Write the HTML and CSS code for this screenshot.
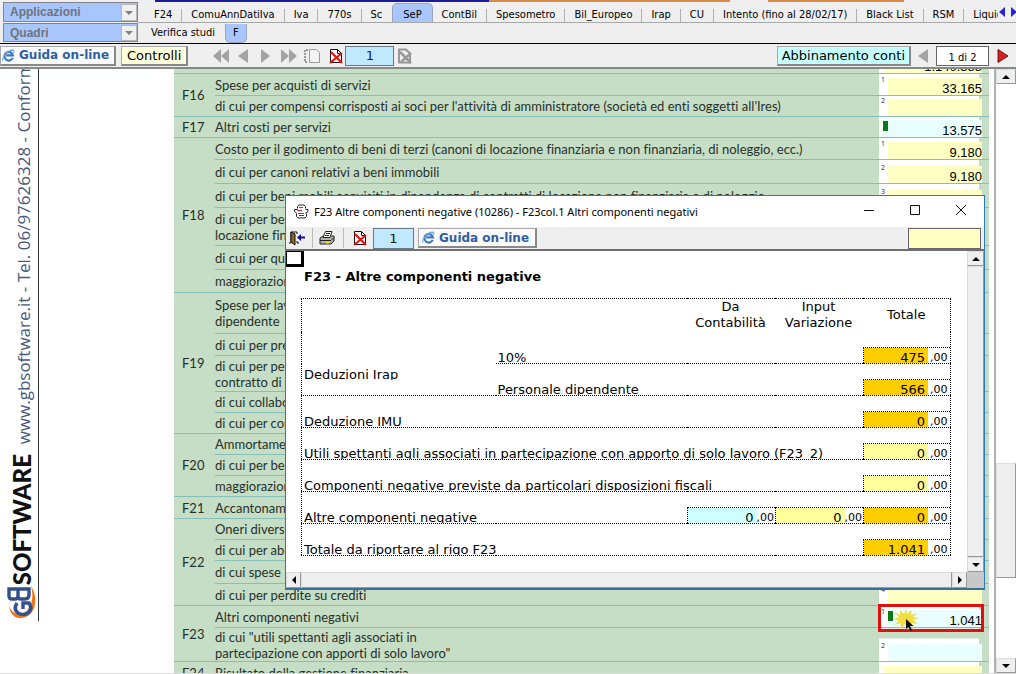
FILE: index.html
```html
<!DOCTYPE html>
<html lang="it">
<head>
    <meta charset="UTF-8">
    <meta name="viewport" content="width=device-width, initial-scale=1.0">
    <title>Quadro F</title>
    <link rel="stylesheet" href="styles.css">
</head>
<body>
    <svg class="defs">
        <symbol id="ie" viewBox="0 0 14 14">
            <path d="M11.5 9.5A4.6 4.6 0 1 1 11.7 6.8H4.5" fill="none" stroke="#3a78c0" stroke-width="2.3"/>
            <path d="M1 12.5C-.5 9 6 1.500 11 1.200c2 0 2 1.300 1.500 2.800" fill="none" stroke="#6da0dc" stroke-width="1.2"/>
        </symbol>
        <symbol id="docx" viewBox="0 0 16 16">
            <path d="M2.500 1.500h7l4 4v9h-11z" fill="#fff" stroke="#111"/>
            <path d="M9.500 1.500v4h4" fill="none" stroke="#111"/>
            <path d="M3 4l11 11M14 5L2 15" stroke="#e01515" stroke-width="2.2"/>
        </symbol>
        <symbol id="up" viewBox="0 0 8 8"><path d="M0 6h8L4 2z"/></symbol>
        <symbol id="down" viewBox="0 0 8 8"><path d="M0 2h8L4 6z"/></symbol>
        <symbol id="left" viewBox="0 0 8 8"><path d="M6 0v8L2 4z"/></symbol>
        <symbol id="right" viewBox="0 0 8 8"><path d="M2 0v8l4-4z"/></symbol>
    </svg>

    <header class="top">
        <div class="strip"></div>
        <div class="menu">
            <div class="combo">
                <select aria-label="Applicazioni"><option>Applicazioni</option></select>
                <span class="combo-arrow"><svg><use href="#down"/></svg></span>
            </div>
            <nav class="tabs">
                <a href="#">F24</a>
                <a href="#">ComuAnnDatiIva</a>
                <a href="#">Iva</a>
                <a href="#">770s</a>
                <a href="#" class="before">Sc</a>
                <a href="#" class="active">SeP</a>
                <a href="#">ContBil</a>
                <a href="#">Spesometro</a>
                <a href="#">Bil_Europeo</a>
                <a href="#">Irap</a>
                <a href="#">CU</a>
                <a href="#">Intento (fino al 28/02/17)</a>
                <a href="#">Black List</a>
                <a href="#">RSM</a>
                <a href="#" class="last">Liquidazioni</a>
            </nav>
            <div class="tab-scroll">
                <svg viewBox="0 0 18 10"><path d="M7 0v10L1 5zM13 0v10l6-5z" fill="#2a22d8"/></svg>
            </div>
        </div>
        <div class="menu second">
            <div class="combo">
                <select aria-label="Quadri"><option>Quadri</option></select>
                <span class="combo-arrow"><svg><use href="#down"/></svg></span>
            </div>
            <nav class="tabs">
                <a href="#" class="before">Verifica studi</a>
                <a href="#" class="active">F</a>
            </nav>
        </div>
        <div class="toolbar">
            <button class="guide"><svg><use href="#ie"/></svg>Guida on-line</button>
            <button class="check">Controlli</button>
            <div class="nav-icons">
                <svg class="nav" viewBox="0 0 132 16">
                    <g fill="#a3a3a3">
                        <path d="M8 1v14L0 8zM16 1v14L8 8z"/>
                        <path d="M35 1v14l-10-7zM48 1l9 7-9 7zM68 1l8 7-8 7zM76 1l8 7-8 7z"/>
                    </g>
                    <g fill="none" stroke="#999">
                        <path d="M96.500 1.500h7l3 3v10h-10z" fill="#f4f4f4"/>
                        <path d="M95 2h-3v12h3" stroke-dasharray="2 1" stroke-width="2"/>
                    </g>
                    <use href="#docx" x="115" y="0" width="16" height="16"/>
                </svg>
                <input class="page" value="1" aria-label="Copia" readonly>
                <svg class="gray-doc" viewBox="0 0 16 16">
                    <path d="M2 1.500h7l4 4v9H2z" fill="#eee" stroke="#999" stroke-width="2"/>
                    <path d="M3 4l11 11M14 5L4 14" stroke="#999" stroke-width="2.500"/>
                </svg>
            </div>
            <button class="match">Abbinamento conti</button>
            <svg class="step" viewBox="0 0 12 14"><path d="M11 0v14L1 7z" fill="#a3a3a3"/></svg>
            <input class="pager" value="1 di 2" aria-label="Pagina" readonly>
            <svg class="step end" viewBox="0 0 12 14"><path d="M1 .5l10 6.500-10 6.500z" fill="#d3211f" stroke="#7b1010"/></svg>
        </div>
    </header>

    <main class="content">
        <aside class="brand">
            <svg class="logo" viewBox="0 0 30 36">
                <path d="M24 1c8 12 5 30-9 32C8 34 3 29 2 21c3 7 8 9 14 7 9-3 11-17 8-27z" fill="#f07818"/>
                <g fill="none" stroke="#34508c" stroke-width="3.400">
                    <path d="M2 4v7q0 3 3 3h3q3 0 3-3V4v7q0 3 3 3h4q4 0 4-4V4z"/>
                    <path d="M10 18q-4 6 1 10 5 3 10 0 5-4 1-10h-6v6"/>
                </g>
            </svg>
            <span class="name">SOFTWARE</span>
            <span class="site">www.gbsoftware.it - Tel. 06/97626328 - Conforme</span>
        </aside>

        <section class="sheet">
            <table>
                <colgroup><col class="c-code"><col><col class="c-value"></colgroup>
                <tbody>
                    <tr><th></th><td></td><td class="value"><div class="cut"><input value="1.140.388" aria-label="F15" readonly></div></td></tr>
                </tbody>
                <tbody>
                    <tr class="h22"><th rowspan="2">F16</th><td>Spese per acquisti di servizi</td><td class="value"><div class="box"><sup>1</sup><input value="33.165" aria-label="F16 col. 1" readonly></div></td></tr>
                    <tr class="h21"><td>di cui per compensi corrisposti ai soci per l'attività di amministratore (società ed enti soggetti all'Ires)</td><td class="value"><div class="box"><sup>2</sup><input aria-label="F16 col. 2" readonly></div></td></tr>
                </tbody>
                <tbody>
                    <tr class="h21"><th>F17</th><td>Altri costi per servizi</td><td class="value"><div class="box wide"><i class="mark"></i><input class="cyan" value="13.575" aria-label="F17" readonly></div></td></tr>
                </tbody>
                <tbody>
                    <tr class="h22"><th rowspan="6">F18</th><td>Costo per il godimento di beni di terzi (canoni di locazione finanziaria e non finanziaria, di noleggio, ecc.)</td><td class="value"><div class="box"><sup>1</sup><input value="9.180" aria-label="F18 col. 1" readonly></div></td></tr>
                    <tr class="h24"><td>di cui per canoni relativi a beni immobili</td><td class="value"><div class="box"><sup>2</sup><input value="9.180" aria-label="F18 col. 2" readonly></div></td></tr>
                    <tr class="h24"><td>di cui per beni mobili acquisiti in dipendenza di contratti di locazione non finanziaria e di noleggio</td><td class="value"><div class="box"><sup>3</sup><input aria-label="F18 col. 3" readonly></div></td></tr>
                    <tr class="h38"><td>di cui per beni mobili<br>locazione finanziaria</td><td class="value"></td></tr>
                    <tr class="h24"><td>di cui per quote</td><td class="value"></td></tr>
                    <tr class="h23"><td>maggiorazioni</td><td class="value"></td></tr>
                </tbody>
                <tbody>
                    <tr class="h41"><th rowspan="5">F19</th><td>Spese per lavoro<br>dipendente</td><td class="value"></td></tr>
                    <tr class="h22"><td>di cui per prestazioni</td><td class="value"></td></tr>
                    <tr class="h36"><td>di cui per personale<br>contratto di</td><td class="value"></td></tr>
                    <tr class="h21"><td>di cui collaboratori</td><td class="value"></td></tr>
                    <tr class="h21"><td>di cui per compensi</td><td class="value"></td></tr>
                </tbody>
                <tbody>
                    <tr class="h21"><th rowspan="3">F20</th><td>Ammortamenti</td><td class="value"></td></tr>
                    <tr class="h21"><td>di cui per beni</td><td class="value"></td></tr>
                    <tr class="h21"><td>maggiorazioni</td><td class="value"></td></tr>
                </tbody>
                <tbody>
                    <tr class="h22"><th>F21</th><td>Accantonamenti</td><td class="value"></td></tr>
                </tbody>
                <tbody>
                    <tr class="h21"><th rowspan="4">F22</th><td>Oneri diversi</td><td class="value"></td></tr>
                    <tr class="h21"><td>di cui per abbonamenti</td><td class="value"></td></tr>
                    <tr class="h23"><td>di cui spese</td><td class="value"></td></tr>
                    <tr class="h22"><td>di cui per perdite su crediti</td><td class="value"><div class="box"><sup>4</sup><input aria-label="F22 col. 4" readonly></div></td></tr>
                </tbody>
                <tbody>
                    <tr class="h22">
                        <th rowspan="2">F23</th>
                        <td>Altri componenti negativi</td>
                        <td class="value">
                            <div class="box selected">
                                <sup>1</sup><i class="mark"></i><input class="cyan" value="1.041" aria-label="F23 col. 1" readonly>
                                <svg class="burst" viewBox="0 0 26 22">
                                    <path d="M13 0l1 5 5-4-1 5 6-2-4 4 6 1-6 2 5 4-6-1 1 5-4-4-2 6-2-6-5 5 1-6-7 2 5-4-6-2 6-2-5-5 6 3 0-5 4 4z" fill="#f3dc3f"/>
                                    <path d="M13 10v10l2.500-2 2 4 1.500-1-2-4h3.500z" fill="#111"/>
                                </svg>
                            </div>
                        </td>
                    </tr>
                    <tr class="h34"><td>di cui "utili spettanti agli associati in<br>partecipazione con apporti di solo lavoro"</td><td class="value half"><div class="box"><sup>2</sup><input class="cyan" aria-label="F23 col. 2" readonly></div></td></tr>
                </tbody>
                <tbody>
                    <tr class="h22"><th>F24</th><td>Risultato della gestione finanziaria</td><td class="value"><div class="box wide"><input aria-label="F24" readonly></div></td></tr>
                </tbody>
            </table>
        </section>

        <div class="vscroll main-scroll">
            <button aria-label="Su"><svg><use href="#up"/></svg></button>
            <div class="track"><div class="thumb"></div></div>
            <button aria-label="Giù"><svg><use href="#down"/></svg></button>
        </div>
    </main>

    <div class="window" role="dialog" aria-labelledby="window-title">
        <div class="titlebar">
            <svg class="app" viewBox="0 0 16 15">
                <path d="M4.500 4.500V2.500L6 1h5l1.500 1.500v2M1.500 5.500h3M12.500 5.500H15M1.500 5.500v2l2 1.500M15 5.500v2l-2.500 1.500M3.500 9.500v3L5 14h7l1.500-1.500v-3" fill="none" stroke="#222"/>
                <path d="M6 3.500h4M4 6.500h5M5 9.500h6" stroke="#e0203a"/><path d="M6 11.500h5" stroke="#3030c8"/>
            </svg>
            <span id="window-title">F23 Altre componenti negative (10286) - F23col.1 Altri componenti negativi</span>
            <div class="controls">
                <button aria-label="Riduci"><svg viewBox="0 0 12 12"><path d="M1 6.500h10"/></svg></button>
                <button aria-label="Ingrandisci"><svg viewBox="0 0 12 12"><path d="M1.500 1.500h9v9h-9z"/></svg></button>
                <button aria-label="Chiudi"><svg viewBox="0 0 12 12"><path d="M1 1l10 10M11 1L1 11"/></svg></button>
            </div>
        </div>
        <div class="wtools">
            <button class="icon" aria-label="Esci">
                <svg viewBox="0 0 16 14"><path d="M0 12h2V1h6v2M8 10v2h2" fill="none" stroke="#111"/><path d="M2 1l4 2v11l-4-3z" fill="#8c6a25" stroke="#111"/><path d="M8 6.500l4-3.500v2.500h4v2h-4V10z" fill="#10109c"/></svg>
            </button>
            <button class="icon" aria-label="Stampa">
                <svg viewBox="0 0 16 14"><path d="M1 7l3-2h11v5l-3 3H1z" fill="#b4b4aa" stroke="#222"/><path d="M4 6.500l2.500-6H13l-2 6z" fill="#fff" stroke="#222"/><path d="M1 9.500h11l3-3M7 2.500h4M6 4.500h4" fill="none" stroke="#222"/><path d="M7 11.500h3" stroke="#e8dc30" stroke-width="2"/></svg>
            </button>
            <button class="icon" aria-label="Elimina"><svg><use href="#docx"/></svg></button>
            <input class="page" value="1" aria-label="Numero" readonly>
            <button class="guide"><svg><use href="#ie"/></svg>Guida on-line</button>
            <input class="note" aria-label="Nota" readonly>
        </div>
        <div class="wbody">
            <div class="pane">
                <div class="corner"></div>
                <h1>F23 - Altre componenti negative</h1>
                <table class="detail">
                    <colgroup><col class="d-label"><col><col class="d-num"><col class="d-num"><col class="d-num"></colgroup>
                    <thead>
                        <tr><th></th><th></th><th>Da<br>Contabilità</th><th>Input<br>Variazione</th><th>Totale</th></tr>
                    </thead>
                    <tbody>
                        <tr><td rowspan="2" class="open"><p>Deduzioni Irap</p></td><td colspan="3"><p>10%</p></td><td><div class="amount gold"><output>475</output><span>,00</span></div></td></tr>
                        <tr><td colspan="3"><p>Personale dipendente</p></td><td><div class="amount gold"><output>566</output><span>,00</span></div></td></tr>
                        <tr><td colspan="4"><p>Deduzione IMU</p></td><td><div class="amount gold"><output>0</output><span>,00</span></div></td></tr>
                        <tr><td colspan="4"><p>Utili spettanti agli associati in partecipazione con apporto di solo lavoro (F23_2)</p></td><td><div class="amount"><output>0</output><span>,00</span></div></td></tr>
                        <tr><td colspan="4"><p>Componenti negative previste da particolari disposizioni fiscali</p></td><td><div class="amount"><output>0</output><span>,00</span></div></td></tr>
                        <tr><td colspan="2"><p>Altre componenti negative</p></td><td><div class="amount aqua part"><output>0</output><span>,00</span></div></td><td><div class="amount part"><output>0</output><span>,00</span></div></td><td><div class="amount gold"><output>0</output><span>,00</span></div></td></tr>
                        <tr><td colspan="4"><p>Totale da riportare al rigo F23</p></td><td><div class="amount gold"><output>1.041</output><span>,00</span></div></td></tr>
                    </tbody>
                </table>
            </div>
            <div class="vscroll">
                <button aria-label="Su"><svg><use href="#up"/></svg></button>
                <div class="track"><div class="thumb"></div></div>
                <button aria-label="Giù"><svg><use href="#down"/></svg></button>
            </div>
            <div class="hscroll">
                <button aria-label="Sinistra"><svg><use href="#left"/></svg></button>
                <div class="track"><div class="thumb"></div></div>
                <button aria-label="Destra"><svg><use href="#right"/></svg></button>
            </div>
            <div class="grip"></div>
        </div>
    </div>
</body>
</html>
```

FILE: styles.css
```css
:root {
    --face: #efefef;
    --blue: #a8c6fb;
    --green: #c6dec6;
    --line: #86bfb5;
    --yellow: #ffffc4;
    --cyan: #e9ffff;
    --verdana: "DejaVu Sans", sans-serif;
    --tahoma: "DejaVu Sans Condensed", "DejaVu Sans", sans-serif;
}

* {
    box-sizing: border-box;
    margin: 0;
    padding: 0;
}

body {
    height: 100vh;
    display: flex;
    flex-direction: column;
    overflow: hidden;
    background: #fff;
    font-family: var(--tahoma);
    font-size: 11px;
    color: #000;
}

a {
    color: inherit;
    text-decoration: none;
}

button, input, select {
    font: inherit;
    color: inherit;
    border-radius: 0;
}

input {
    min-width: 0;
    outline: none;
}

.defs {
    position: absolute;
    width: 0;
    height: 0;
}

/* Header */
.top {
    flex: none;
    background: var(--face);
    border-bottom: 2px solid #848a84;
}

.strip {
    height: 2px;
    background: linear-gradient(to right, #efefef 155px, #1a1a9c 155px, #1a1a9c 489px, #d98c4a 489px, #d98c4a 730px, #efefef 730px, #efefef 768px, #d98c4a 768px, #d98c4a 904px, #efefef 904px);
}

.menu {
    display: flex;
    height: 21px;
    padding-left: 3px;
}

.menu.second {
    height: 20px;
}

.combo {
    position: relative;
    flex: none;
    width: 135px;
    margin-bottom: 1px;
}

.combo select {
    appearance: none;
    display: block;
    width: 100%;
    height: 100%;
    padding-left: 6px;
    border: 1px solid #84848c;
    background: var(--blue);
    color: #6c737d;
    font: bold 12px "Liberation Sans", sans-serif;
    opacity: 1;
}

.combo-arrow {
    position: absolute;
    top: 2px;
    right: 1px;
    bottom: 1px;
    width: 16px;
    display: flex;
    align-items: center;
    justify-content: center;
    background: #f0f0f0;
    border: 1px solid #b8b8b8;
    pointer-events: none;
}

.combo-arrow svg {
    width: 8px;
    height: 8px;
    fill: #808080;
}

.tabs {
    flex: 1;
    display: flex;
    align-items: flex-end;
    min-width: 0;
    overflow: hidden;
    padding-left: 7px;
    border-bottom: 1px solid #a8a8a8;
}

.tabs a {
    position: relative;
    flex: none;
    height: 19px;
    padding: 0 10px 0 9px;
    line-height: 23px;
    white-space: nowrap;
}

.tabs a::after {
    content: "";
    position: absolute;
    right: 0;
    bottom: 0;
    width: 1px;
    height: 13px;
    background: #b0b0b0;
}

.tabs .active {
    padding: 0 10px;
    line-height: 21px;
    background: var(--blue);
    border: 1px solid #9aa4b8;
    border-width: 1px 1px 0;
    border-radius: 5px 5px 0 0;
}

.tabs .active::after, .tabs .before::after, .tabs .last::after {
    display: none;
}

.second .tabs {
    padding-left: 4px;
    border-bottom: 0;
}

.second .tabs a {
    line-height: 17px;
}

.second .tabs .active {
    padding: 0 7px;
    border-width: 0 1px 1px;
    border-radius: 0 0 5px 5px;
}

.tab-scroll {
    flex: none;
    width: 18px;
    padding-top: 5px;
    border-bottom: 1px solid #a8a8a8;
}

.tab-scroll svg {
    display: block;
    height: 10px;
    width: 18px;
}

.toolbar {
    display: flex;
    align-items: center;
    height: 24px;
    border-top: 1px solid #000;
}

.toolbar button, .guide {
    flex: none;
    height: 20px;
    border: 1px solid #aaa;
    border-right: 2px solid #888;
    border-bottom: 2px solid #888;
    white-space: nowrap;
}

.guide {
    display: flex;
    align-items: center;
    gap: 4px;
    padding: 0 6px 0 3px;
    background: #fafafa;
    color: #2f5fa3;
    font: bold 12px var(--verdana);
}

.guide svg {
    width: 13px;
    height: 13px;
}

.toolbar .guide {
    padding: 0 5px 0 1px;
}

.check, .match {
    padding: 0 5px;
    font: 13px var(--verdana);
}

.toolbar .check {
    margin-left: 5px;
    background: #ffffdc;
}

.toolbar .match {
    margin-left: auto;
    padding: 0 4px;
    background: #c6ffff;
}

.nav-icons {
    display: flex;
    align-items: center;
    margin-left: 25px;
}

.nav {
    width: 132px;
    height: 16px;
}

.page {
    width: 49px;
    height: 20px;
    border: 1px solid #6a7a84;
    background: #c0e8ff;
    color: #1414a0;
    font: 13px var(--verdana);
    text-align: center;
}

.gray-doc {
    width: 16px;
    height: 16px;
    margin-left: 3px;
}

.step {
    flex: none;
    width: 12px;
    height: 14px;
    margin: 0 7px 0 6px;
}

.step.end {
    margin: 0 7px 0 8px;
}

.pager {
    flex: none;
    width: 53px;
    height: 20px;
    padding-top: 3px;
    border: 1px solid #666;
    text-align: center;
}

/* Page area */
.content {
    flex: 1;
    min-height: 0;
    display: flex;
    overflow: hidden;
    border-bottom: 1px solid #ddd;
}

.brand {
    flex: none;
    width: 39px;
    height: 552px;
    margin-right: 135px;
    display: flex;
    flex-direction: column-reverse;
    align-items: center;
    overflow: hidden;
    border-right: 1px solid #333;
}

.brand span {
    flex: none;
    writing-mode: vertical-rl;
    transform: rotate(180deg);
    white-space: nowrap;
}

.logo {
    flex: none;
    width: 30px;
    height: 36px;
    margin-left: 6px;
}

.name {
    margin-left: 6px;
    font: 900 24px/24px Lato, sans-serif;
    color: #111;
}

.site {
    margin: 0 0 9px 10px;
    font: 17px/20px "Open Sans", sans-serif;
    color: #47587c;
}

.sheet {
    flex: 1;
    min-width: 0;
    height: 604px;
    overflow: hidden;
}

.sheet table {
    width: 100%;
    table-layout: fixed;
    border-collapse: collapse;
    background: var(--green);
    font: 13px/16px Lato, sans-serif;
    font-variant-ligatures: none;
    color: #26302a;
}

.c-code { width: 41px; }
.c-value { width: 110px; }

.h21 { height: 21px; }
.h22 { height: 22px; }
.h23 { height: 23px; }
.h24 { height: 24px; }
.h34 { height: 34px; }
.h36 { height: 36px; }
.h38 { height: 38px; }
.h41 { height: 41px; }

.sheet th, .sheet td {
    border-bottom: 1px solid var(--line);
    font-weight: normal;
    text-align: left;
    white-space: nowrap;
}

.sheet th {
    padding-left: 8px;
}

.sheet .value {
    padding-right: 7px;
    vertical-align: bottom;
    background: linear-gradient(to right, #fff calc(100% - 10px), var(--green) 0);
}

.sheet .half {
    background: linear-gradient(var(--green) 10px, transparent 0), linear-gradient(to right, #fff calc(100% - 10px), var(--green) 0);
}

.box {
    position: relative;
    display: flex;
    align-items: flex-end;
    height: 20px;
    padding-left: 9px;
}

.box.wide {
    padding-left: 4px;
}

.box sup {
    position: absolute;
    top: 1px;
    left: 2px;
    font: 7px/8px "Open Sans", sans-serif;
}

.box input, .cut input {
    display: block;
    flex: 1;
    width: 100%;
    height: 17px;
    padding-top: 3px;
    border: 0;
    background: var(--yellow);
    color: #000;
    font: 13px/14px "Liberation Sans", sans-serif;
    text-align: right;
}

.box .cyan {
    background: var(--cyan);
}

.cut {
    display: flex;
    align-items: flex-end;
    height: 4px;
    padding-left: 4px;
    overflow: hidden;
}

.mark {
    position: absolute;
    top: 4px;
    left: 4px;
    width: 5px;
    height: 10px;
    background: #0a7a14;
}

.selected::after {
    content: "";
    position: absolute;
    inset: -3px -2px -5px -1px;
    border: 3px solid #e01010;
}

.selected .mark {
    left: 9px;
}

.burst {
    position: absolute;
    top: 2px;
    left: 14px;
    z-index: 1;
    width: 26px;
    height: 22px;
}

/* Scroll bars */
.vscroll {
    display: flex;
    flex-direction: column;
    background: #fff;
}

.hscroll {
    display: flex;
    background: #fff;
}

.vscroll button, .hscroll button {
    flex: none;
    display: flex;
    align-items: center;
    justify-content: center;
    background: var(--face);
    border: 1px solid #ddd;
    border-right-color: #999;
    border-bottom-color: #999;
}

.vscroll button { height: 15px; }
.hscroll button { width: 15px; }

.vscroll svg, .hscroll svg {
    width: 8px;
    height: 8px;
}

.track {
    flex: 1;
    display: flex;
    flex-direction: column;
}

.thumb {
    flex: 1;
    background: var(--face);
    border: 1px solid #ddd;
    border-right-color: #999;
    border-bottom-color: #999;
}

.main-scroll {
    flex: none;
    width: 22px;
    margin-left: 5px;
    border-left: 2px solid #b0b0b0;
}

.main-scroll .thumb {
    flex: none;
    height: 20%;
    margin-top: auto;
    margin-bottom: 80px;
}

/* Detail window */
.window {
    position: absolute;
    top: 195px;
    left: 285px;
    width: 700px;
    height: 395px;
    display: flex;
    flex-direction: column;
    background: #fff;
    border: 1px solid #2a7ab8;
    border-bottom: 2px solid #3a6f9c;
}

.titlebar {
    display: flex;
    align-items: center;
    height: 31px;
    padding-left: 7px;
    gap: 5px;
    font: 11px "Noto Sans", sans-serif;
}

.app {
    width: 16px;
    height: 15px;
}

.controls {
    display: flex;
    margin-left: auto;
}

.controls button {
    width: 46px;
    height: 28px;
    border: 0;
    background: none;
}

.controls svg {
    width: 12px;
    height: 12px;
    fill: none;
    stroke: #111;
}

.wtools {
    display: flex;
    align-items: center;
    height: 24px;
    padding: 0 3px;
    background: var(--face);
    border-bottom: 2px solid #707070;
}

.icon {
    flex: none;
    width: 24px;
    height: 20px;
    border: 0;
    border-right: 1px solid #bbb;
    background: none;
}

.icon + .icon {
    width: 31px;
    padding-left: 6px;
}

.icon + .icon + .icon {
    width: 29px;
    padding-left: 8px;
    border-right: 0;
}

.icon svg {
    display: block;
    width: 16px;
    height: 16px;
}

.wtools .page {
    width: 41px;
    height: 21px;
    margin-right: 4px;
    color: #111;
}

.note {
    width: 73px;
    height: 21px;
    margin-left: auto;
    border: 1px solid #666;
    background: var(--yellow);
}

.wbody {
    flex: 1;
    min-height: 0;
    display: grid;
    grid-template-columns: 1fr 17px;
    grid-template-rows: 1fr 16px;
}

.pane {
    overflow: hidden;
    font: 13px/16px var(--verdana);
}

.corner {
    width: 18px;
    height: 16px;
    border: solid #000;
    border-width: 1px 3px 3px 1px;
}

.pane h1 {
    height: 15px;
    margin: 2px 0 14px 18px;
    overflow: hidden;
    font: bold 13px/15px var(--verdana);
}

.detail {
    width: 650px;
    margin-left: 15px;
    table-layout: fixed;
    border-collapse: collapse;
    border: 1px dotted #000;
}

.d-label { width: 194px; }
.d-num { width: 88px; }

.detail th {
    height: 33px;
    font-weight: normal;
}

.detail td {
    height: 32px;
    vertical-align: bottom;
    border-bottom: 1px dotted #000;
}

.detail p {
    height: 15px;
    padding-left: 2px;
    overflow: hidden;
    line-height: 19px;
    white-space: nowrap;
}

.detail .open {
    padding-bottom: 15px;
}

.amount {
    display: flex;
    height: 16px;
    border: 1px dotted #000;
    border-width: 1px 0 0 1px;
    overflow: hidden;
}

.amount output {
    flex: 1;
    padding-right: 3px;
    background: #ffff9c;
    text-align: right;
    line-height: 20px;
}

.amount span {
    width: 22px;
    padding-left: 2px;
    font-size: 11px;
    line-height: 20px;
}

.amount.part span {
    width: 18px;
    padding-left: 0;
}

.amount.gold output { background: #ffce00; }
.amount.aqua output { background: #ceffff; }

.grip {
    background: #c8c8c8;
}
```
